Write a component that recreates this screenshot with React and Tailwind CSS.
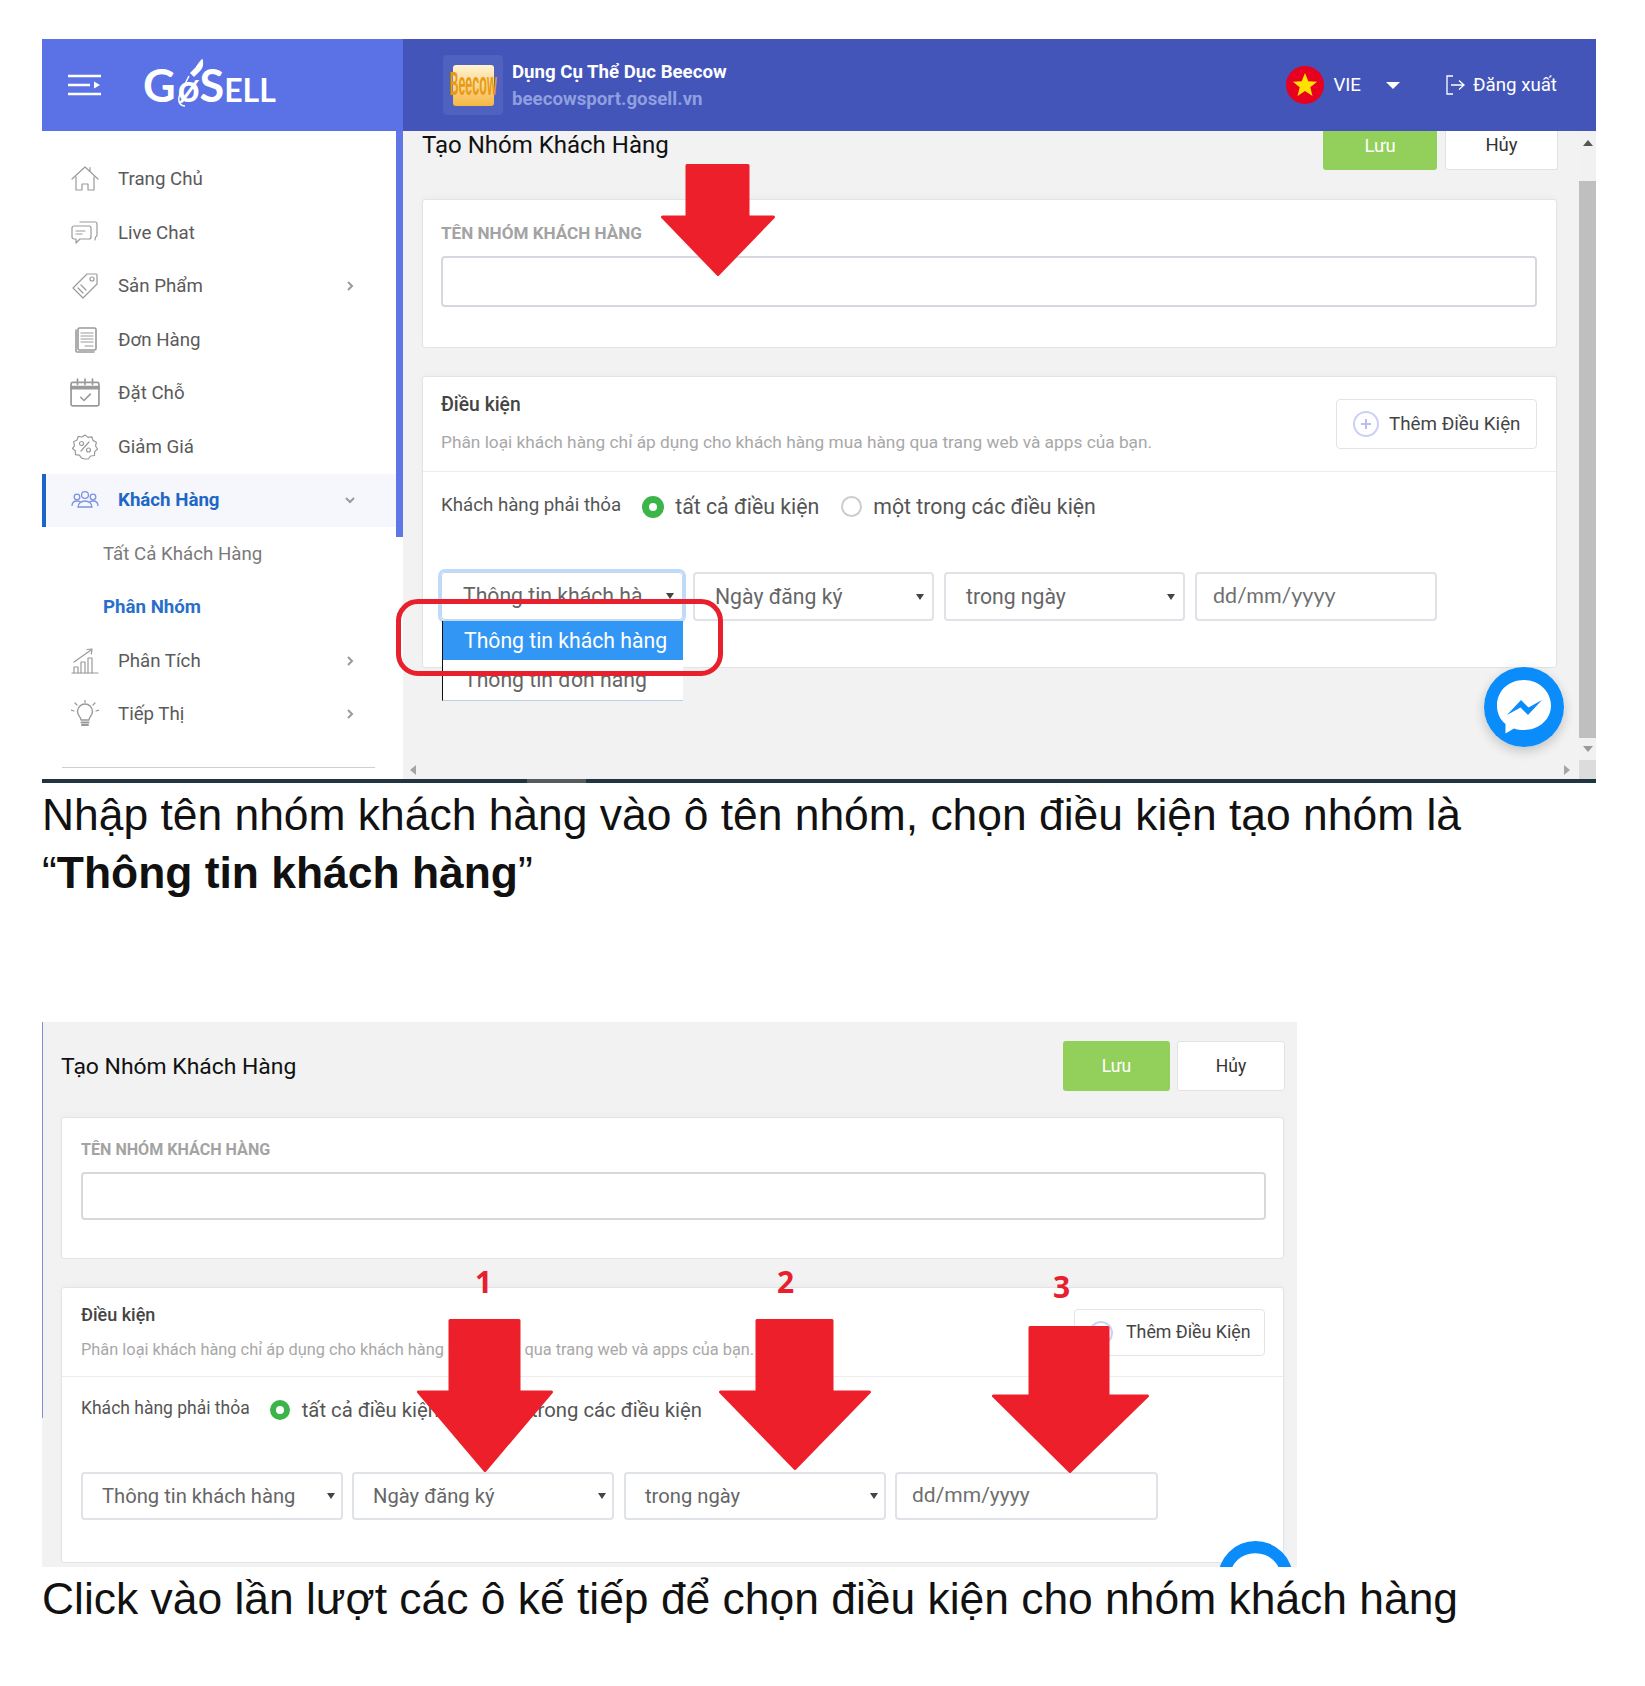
import React from "react";

const I = ({ children, size = 28 }) => (
  <svg width={size} height={size} viewBox="0 0 28 28" fill="none" stroke="#9a9a9a" strokeWidth="1.2" strokeLinecap="round" strokeLinejoin="round" className="shrink-0">
    {children}
  </svg>
);

const icons = {
  home: (
    <I>
      <path d="M1 14 14 2l13 12M19 6V2.5M5 12v13h6v-6h6v6h6V12" />
    </I>
  ),
  chat: (
    <I>
      <path d="M9 3h15a2 2 0 0 1 2 2v11a2 2 0 0 1-1.5 2l-.5 3" />
      <path d="M3 7h15a2 2 0 0 1 2 2v9a2 2 0 0 1-2 2H9l-4 4v-4H3a2 2 0 0 1-2-2V9a2 2 0 0 1 2-2Z" />
      <path d="M5 12h9M5 15h6" />
    </I>
  ),
  tag: (
    <I>
      <path d="M16 2h9a1 1 0 0 1 1 1v9L12 26 2 16 16 2Z" />
      <circle cx="21" cy="7" r="2" />
      <path d="m7 16 5 5M10 13l5 5" />
    </I>
  ),
  order: (
    <I>
      <path d="M5 4v21a1 1 0 0 0 1 1h17" strokeWidth="1.6" />
      <rect x="7" y="2" width="18" height="22" rx="1.5" strokeWidth="1.6" />
      <path d="M10 7h12M10 10h12M10 13h12M10 16h12M14 20h8" />
    </I>
  ),
  cal: (
    <I size={30}>
      <rect x="1" y="4" width="26" height="22" rx="1.5" strokeWidth="1.6" />
      <path d="M1 9h26" strokeWidth="3.400" />
      <path d="M7 1v5M14 1v5M21 1v5" strokeWidth="1.6" />
      <path d="m10 18 3 3 6-6" strokeWidth="1.5" />
    </I>
  ),
  sale: (
    <I>
      <path d="M14 2l3 2.4 3.8-.6 1.2 3.6 3.4 1.8-.9 3.8 2 3-2.8 2.6-.2 3.9-3.8.5-2.4 3L14 26l-3.3-.9-2.4-3-3.8-.5-.2-3.9L1.5 15.6l2-3-.9-3.8L6 7l1.2-3.6 3.8.6L14 2Z" />
      <path d="m10 18 8-9" />
      <circle cx="10.5" cy="10.5" r="2" />
      <circle cx="17.5" cy="17" r="2" />
    </I>
  ),
  users: (
    <svg width="28" height="28" viewBox="0 0 28 28" fill="none" stroke="#7d92e2" strokeWidth="1.3" className="shrink-0">
      <circle cx="14" cy="9" r="3.4" />
      <circle cx="6" cy="11" r="2.8" />
      <circle cx="22" cy="11" r="2.8" />
      <path d="M1 20c0-3 2-5 5-5 2 0 3 .5 4 1.5M27 20c0-3-2-5-5-5-2 0-3 .5-4 1.5M7 21c0-3.500 3-6 7-6s7 2.500 7 6H7Z" />
    </svg>
  ),
  chart: (
    <I>
      <path d="M1 26h26" />
      <path d="M3 26v-6h4v6M10 26V15h4v11M17 26V11h4v15" />
      <path d="M3 15 20 3" />
      <path d="M16 2.500 21 2l-.6 5" />
    </I>
  ),
  bulb: (
    <I>
      <path d="M10 20c0-3-3.500-4.500-3.500-8.500a7.500 7.500 0 0 1 15 0C21.500 15.500 18 17 18 20h-8Z" strokeWidth="1.4" />
      <path d="M10.500 22.500h7M11 25h6" strokeWidth="2" />
      <path d="M14 0v2.500M4 3l2 2M24 3l-2 2M0 10l3 1M28 10l-3 1" />
    </I>
  ),
};

const Chevron = ({ down }) => (
  <svg width="12" height="12" viewBox="0 0 12 12" fill="none" stroke="#9a9a9a" strokeWidth="2" className="ml-auto mr-[40px]">
    <path d={down ? "M2 4l4 4 4-4" : "M4 2l4 4-4 4"} />
  </svg>
);

const Row = ({ icon, label, arrow }) => (
  <div className="flex h-[53.5px] items-center pl-[29px] text-[18.700px] text-[#5a5a5a]">
    <span className="flex w-[28px] justify-center">{icons[icon]}</span>
    <span className="ml-[19px]">{label}</span>
    {arrow && <Chevron />}
  </div>
);

const Caret = ({ near }) => (
  <svg width="8" height="6" viewBox="0 0 8 6" className={near ? "absolute right-[6px] top-1/2 -translate-y-1/2" : "absolute right-[8px] top-1/2 -translate-y-1/2"} fill="#444">
    <path d="M0 0h8L4 6z" />
  </svg>
);

const Arrow = ({ className, w, h, s1, s2, hy, tip }) => (
  <svg width={w} height={h} viewBox={`0 0 ${w} ${h}`} className={className} fill="#ed1f2b" stroke="#ed1f2b" strokeWidth="3" strokeLinejoin="round">
    <polygon points={`${s1},1.500 ${s2},1.500 ${s2},${hy} ${w - 1.5},${hy} ${tip},${h - 1.5} 1.500,${hy} ${s1},${hy}`} />
  </svg>
);

const Bubble = ({ size }) => (
  <svg width={size} height={size} viewBox="0 0 80 80" className="block">
    <circle cx="40" cy="40" r="40" fill="#0a8dfb" />
    <path d="M40 13c-15.500 0-27 11-27 25.500 0 7.500 3 14 8.500 18.500v9.500l8.500-5c3 1 6.500 1.500 10 1.500 15.500 0 27-11 27-24.500S55.500 13 40 13Z" fill="#fff" />
    <path d="m23 48 14-15 7.500 7.500L58 33 44 48l-7.500-7.500L23 48Z" fill="#0a8dfb" />
  </svg>
);

export default function App() {
  return (
    <div className="min-h-[1686px] w-[1645px] bg-white pl-[42px] pt-[39px] font-['Roboto',sans-serif]">
      {/* first screenshot */}
      <section className="relative flex h-[744px] w-[1554px] flex-col overflow-hidden border-b-4 border-[#1f3540]">
        <header className="flex h-[92px] shrink-0">
          <div className="relative flex w-[361px] items-center bg-[#5a72e6] pl-[26px]">
            <svg width="33" height="22" viewBox="0 0 33 22" stroke="#fff" strokeWidth="2.400" fill="#fff">
              <path d="M0 2h33M0 11h22M0 20h33" />
              <path d="M26 7.500 32 11l-6 3.500z" stroke="none" />
            </svg>
            <div className="relative ml-[42px] flex h-[52px] w-[136px] items-baseline pt-[6px] font-['Lato',sans-serif] font-bold leading-none text-white">
              <span className="text-[45px] leading-[40px]">G</span>
              <span className="ml-[2px] text-[38px] leading-[40px]">ø</span>
              <span className="text-[45px] leading-[40px]">S</span>
              <span className="text-[32px] leading-[34px]">ELL</span>
              <svg width="30" height="50" viewBox="0 0 30 50" className="absolute left-[32px] top-0" fill="none" stroke="#fff" strokeWidth="1.500">
                <path d="M27 1c1 4 0 8-3 11l-5 5-3-3 5-5c2-3 4-6 6-8Z" fill="#fff" />
                <path d="M14 17 5 35c-3 7 0 12 5 12" />
              </svg>
            </div>
          </div>
          <div className="flex flex-1 items-center bg-[#4355b8] pl-[40px] pr-[39px]">
            <div className="flex h-[60px] w-[60px] items-center justify-center rounded-[4px] bg-[#5061c0]">
              <div className="flex h-[41px] w-[41px] items-center justify-center rounded-[3px] bg-gradient-to-b from-[#fff3d0] to-[#f6b73c] font-['Liberation_Sans',sans-serif] text-[12.500px] font-bold text-[#e89b12]">
                <span className="scale-y-[2.600]">Beecow</span>
              </div>
            </div>
            <div className="ml-[9px] flex flex-col pt-[2px] font-bold">
              <span className="text-[18.650px] leading-[27px] text-white">Dụng Cụ Thể Dục Beecow</span>
              <span className="text-[18.700px] leading-[27px] text-[#8f9fe0]">beecowsport.gosell.vn</span>
            </div>
            <svg width="38" height="38" viewBox="0 0 38 38" className="ml-auto">
              <circle cx="19" cy="19" r="19" fill="#e8001f" />
              <path d="m19 7 3.300 8.200 8.800.500-6.800 5.600 2.200 8.600L19 25.100l-7.500 4.800 2.200-8.600-6.800-5.600 8.800-.500z" fill="#ffe000" />
            </svg>
            <span className="ml-[9px] text-[18.700px] text-white">VIE</span>
            <svg width="14" height="7" viewBox="0 0 14 7" fill="#fff" className="ml-[25px]">
              <path d="M0 0h14L7 7z" />
            </svg>
            <svg width="20" height="20" viewBox="0 0 20 20" fill="none" stroke="#fff" strokeWidth="1.300" className="ml-[45px]">
              <path d="M8 1H2v18h6M6 10h13M14 5.500l5 4.500-5 4.500" />
            </svg>
            <span className="ml-[8px] text-[18.700px] text-white">Đăng xuất</span>
          </div>
        </header>

        <div className="flex min-h-0 flex-1">
          <aside className="flex w-[361px] shrink-0 bg-white">
            <div className="w-[354px] pt-[21.500px]">
              <Row icon="home" label="Trang Chủ" />
              <Row icon="chat" label="Live Chat" />
              <Row icon="tag" label="Sản Phẩm" arrow />
              <Row icon="order" label="Đơn Hàng" />
              <Row icon="cal" label="Đặt Chỗ" />
              <Row icon="sale" label="Giảm Giá" />
              <div className="flex h-[53.500px] items-center border-l-4 border-[#1a66c8] bg-[#f5f7fc] pl-[25px] text-[18.700px] font-bold text-[#1f67c4]">
                <span className="flex w-[28px] justify-center">{icons.users}</span>
                <span className="ml-[19px]">Khách Hàng</span>
                <Chevron down />
              </div>
              <div className="flex h-[53.500px] items-center pl-[61px] text-[18.700px] text-[#7a7a7a]">Tất Cả Khách Hàng</div>
              <div className="flex h-[53.500px] items-center pl-[61px] text-[18.700px] font-bold text-[#2a6fc9]">Phân Nhóm</div>
              <Row icon="chart" label="Phân Tích" arrow />
              <Row icon="bulb" label="Tiếp Thị" arrow />
              <div className="ml-[20px] mt-[26px] h-px w-[313px] bg-[#cfcfcf]" />
            </div>
            <div className="h-[406px] w-[7px] bg-[#5f77e6]" />
          </aside>

          <main className="relative flex min-w-0 flex-1 flex-col bg-[#f2f2f2]">
            <div className="flex min-h-0 flex-1">
              <div className="min-w-0 flex-1 pl-[19px] pr-[22px]">
                <div className="flex h-[39px] items-start justify-between">
                  <h1 className="text-[24px] font-normal leading-[28px] text-[#111]">Tạo Nhóm Khách Hàng</h1>
                  <div className="-mr-px flex gap-[8px]">
                    <div className="flex h-[39px] w-[114px] items-center justify-center rounded-b-[3px] bg-[#92d05b] pb-[8px] text-[18.500px] text-white">Lưu</div>
                    <div className="flex h-[39px] w-[113px] items-center justify-center rounded-b-[3px] border-x border-b border-[#e2e2e2] bg-white pb-[8px] text-[18.500px] text-[#333]">Hủy</div>
                  </div>
                </div>
                <div className="mt-[29px] h-[149px] rounded-[3px] border border-[#e3e3e3] bg-white pl-[18px] pr-[19px] pt-[23px] shadow-[0_-3px_6px_rgba(0,0,0,0.02)]">
                  <div className="text-[17.100px] font-bold leading-[20px] text-[#a3a3a3]">TÊN NHÓM KHÁCH HÀNG</div>
                  <div className="mt-[13px] h-[51px] rounded-[4px] border-2 border-[#d5d9df] bg-white" />
                </div>
                <div className="mt-[28px] h-[292px] rounded-[3px] border border-[#e3e3e3] bg-white shadow-[0_-3px_6px_rgba(0,0,0,0.02)]">
                  <div className="flex h-[95px] justify-between border-b border-[#ececec] pl-[18px] pr-[19px]">
                    <div>
                      <div className="mt-[16px] text-[19.300px] font-medium leading-[24px] text-[#444]">Điều kiện</div>
                      <div className="mt-[14px] text-[17.300px] leading-[22px] text-[#a8a8a8]">Phân loại khách hàng chỉ áp dụng cho khách hàng mua hàng qua trang web và apps của bạn.</div>
                    </div>
                    <div className="mt-[22px] flex h-[50px] w-[201px] items-center rounded-[4px] border border-[#e2e4ea] pl-[16px] text-[18.800px] text-[#444]">
                      <svg width="26" height="26" viewBox="0 0 26 26" fill="none" stroke="#ccd0f5" strokeWidth="2">
                        <circle cx="13" cy="13" r="12" />
                        <path d="M13 8v10M8 13h10" stroke="#b9bff0" />
                      </svg>
                      <span className="ml-[10px]">Thêm Điều Kiện</span>
                    </div>
                  </div>
                  <div className="flex h-[68px] items-center pl-[18px] pt-[1px] text-[#555]">
                    <span className="-mt-[2px] text-[18.700px]">Khách hàng phải thỏa</span>
                    <span className="ml-[21px] h-[22px] w-[22px] rounded-full border-[7px] border-[#3cb44a] bg-white" />
                    <span className="ml-[11px] text-[21.300px]">tất cả điều kiện</span>
                    <span className="ml-[22px] h-[21px] w-[21px] rounded-full border-2 border-[#cccccc] bg-white" />
                    <span className="ml-[11px] text-[21.300px]">một trong các điều kiện</span>
                  </div>
                  <div className="mt-[32px] flex items-start gap-[10px] pl-[18px] text-[21.200px] text-[#666]">
                    <div className="relative h-[48px] w-[242px] rounded-[4px] border border-[#cfd5de] shadow-[0_0_0_3px_#bcdcff]">
                      <div className="flex h-full items-center pl-[21px]">
                        <span className="w-[180px] overflow-hidden whitespace-nowrap">Thông tin khách hàng</span>
                      </div>
                      <Caret />
                      <div className="absolute left-0 top-[48px] z-10 h-[80px] w-[241px] border-b border-l border-b-[#bcd0ee] border-l-[#111] bg-white">
                        <div className="flex h-[39px] items-center bg-[#3296f5] pl-[21px] text-white">Thông tin khách hàng</div>
                        <div className="flex h-[40px] items-center pl-[21px]">Thông tin đơn hàng</div>
                      </div>
                    </div>
                    <div className="relative flex h-[49px] w-[241px] items-center rounded-[4px] border-2 border-[#dfe2e7] pl-[20px]">
                      Ngày đăng ký
                      <Caret />
                    </div>
                    <div className="relative flex h-[49px] w-[241px] items-center rounded-[4px] border-2 border-[#dfe2e7] pl-[20px]">
                      trong ngày
                      <Caret />
                    </div>
                    <div className="flex h-[49px] w-[242px] items-center rounded-[4px] border-2 border-[#dfe2e7] pb-[2px] pl-[16px] font-['Lato',sans-serif] text-[21.500px] text-[#6f6f6f]">dd/mm/yyyy</div>
                  </div>
                </div>
              </div>
              <div className="flex w-[17px] shrink-0 flex-col bg-[#f1f1f1]">
                <div className="flex h-[50px] justify-center pt-[9px]">
                  <svg width="10" height="6" viewBox="0 0 10 6" fill="#555">
                    <path d="M5 0l5 6H0z" />
                  </svg>
                </div>
                <div className="min-h-0 flex-1 bg-[#bfbfbf]" />
                <div className="flex h-[22px] items-center justify-center">
                  <svg width="10" height="6" viewBox="0 0 10 6" fill="#9a9a9a">
                    <path d="M0 0h10L5 6z" />
                  </svg>
                </div>
              </div>
            </div>
            <div className="flex h-[19px] shrink-0 items-center justify-between">
              <svg width="6" height="10" viewBox="0 0 6 10" fill="#a5a5a5" className="ml-[7px]">
                <path d="M6 0v10L0 5z" />
              </svg>
              <div className="flex items-center">
                <svg width="6" height="10" viewBox="0 0 6 10" fill="#a5a5a5" className="mr-[9px]">
                  <path d="M0 0v10l6-5z" />
                </svg>
                <div className="h-[19px] w-[17px] bg-[#dcdcdc]" />
              </div>
            </div>
          </main>
        </div>

        {/* overlays */}
        <Arrow className="absolute left-[619px] top-[125px] z-20" w={114} h={112} s1={26} s2={87} hy={53} tip={57} />
        <div className="absolute left-[354px] top-[560px] z-20 h-[77px] w-[327px] rounded-[22px] border-[5px] border-[#e8202e]" />
        <div className="absolute left-[1442px] top-[628px] z-20 rounded-full shadow-[0_4px_12px_rgba(0,0,0,0.2)]">
          <Bubble size={80} />
        </div>
      </section>
      <div className="relative -mt-[4px] ml-[485px] h-[4px] w-[59px] bg-[#555a5e]" />

      <div className="mt-[3px] w-[1554px] font-['Liberation_Sans',sans-serif] text-[44.400px] leading-[58px] text-[#111]">
        <p>Nhập tên nhóm khách hàng vào ô tên nhóm, chọn điều kiện tạo nhóm là</p>
        <p>“<b>Thông tin khách hàng</b>”</p>
      </div>

      {/* second screenshot */}
      <section className="relative mt-[120px] h-[545px] w-[1255px] overflow-hidden bg-[#f2f2f2] pl-[19px] pr-[12px] pt-[19px]">
        <div className="absolute left-0 top-0 h-[396px] w-px bg-[#7d8fd8]" />
        <div className="flex h-[50px] items-center justify-between">
          <h2 className="pt-[2px] text-[22.900px] font-normal text-[#111]">Tạo Nhóm Khách Hàng</h2>
          <div className="flex gap-[7px]">
            <div className="flex h-[50px] w-[107px] items-center justify-center rounded-[3px] bg-[#92d05b] text-[17.500px] text-white">Lưu</div>
            <div className="flex h-[50px] w-[108px] items-center justify-center rounded-[3px] border border-[#e2e2e2] bg-white text-[17.500px] text-[#333]">Hủy</div>
          </div>
        </div>
        <div className="mr-[1px] mt-[26px] h-[142px] rounded-[3px] border border-[#e3e3e3] bg-white pl-[19px] pr-[17px] pt-[22px] shadow-[0_-3px_6px_rgba(0,0,0,0.02)]">
          <div className="text-[16.100px] font-bold leading-[20px] text-[#a3a3a3]">TÊN NHÓM KHÁCH HÀNG</div>
          <div className="mt-[12px] h-[48px] rounded-[4px] border-2 border-[#d9d9d9] bg-white" />
        </div>
        <div className="mr-[1px] mt-[28px] h-[276px] rounded-[3px] border border-[#e3e3e3] bg-white shadow-[0_-3px_6px_rgba(0,0,0,0.02)]">
          <div className="flex h-[89px] justify-between border-b border-[#ececec] pl-[19px] pr-[18px]">
            <div>
              <div className="mt-[15px] text-[18px] font-medium leading-[24px] text-[#444]">Điều kiện</div>
              <div className="mt-[12px] text-[16.360px] leading-[22px] text-[#a8a8a8]">Phân loại khách hàng chỉ áp dụng cho khách hàng mua hàng qua trang web và apps của bạn.</div>
            </div>
            <div className="mt-[21px] flex h-[47px] w-[191px] items-center rounded-[4px] border border-[#e2e4ea] pl-[14px] text-[17.800px] text-[#444]">
              <svg width="24" height="24" viewBox="0 0 24 24" fill="none" stroke="#ccd0f5" strokeWidth="2">
                <circle cx="12" cy="12" r="11" />
              </svg>
              <span className="ml-[13px]">Thêm Điều Kiện</span>
            </div>
          </div>
          <div className="flex h-[62px] items-center pl-[19px] pt-[4px] text-[#555]">
            <span className="-mt-[3px] text-[17.500px]">Khách hàng phải thỏa</span>
            <span className="ml-[20px] h-[20px] w-[20px] rounded-full border-[6px] border-[#3cb44a] bg-white" />
            <span className="ml-[12px] text-[20.300px]">tất cả điều kiện</span>
            <span className="ml-[22px] h-[20px] w-[20px] rounded-full border-2 border-[#cccccc] bg-white" />
            <span className="ml-[9px] text-[20.300px]">một trong các điều kiện</span>
          </div>
          <div className="mt-[33px] flex gap-[9px] pl-[19px] text-[20.200px] text-[#666]">
            <div className="relative flex h-[48px] w-[262px] items-center rounded-[4px] border-2 border-[#dfe2e7] pl-[19px]">
              Thông tin khách hàng
              <Caret near />
            </div>
            <div className="relative flex h-[48px] w-[262px] items-center rounded-[4px] border-2 border-[#dfe2e7] pl-[19px]">
              Ngày đăng ký
              <Caret near />
            </div>
            <div className="relative ml-px flex h-[48px] w-[262px] items-center rounded-[4px] border-2 border-[#dfe2e7] pl-[19px]">
              trong ngày
              <Caret near />
            </div>
            <div className="flex h-[48px] w-[263px] items-center rounded-[4px] border-2 border-[#dfe2e7] pl-[15px] text-[21px] text-[#6f6f6f]">dd/mm/yyyy</div>
          </div>
        </div>

        <span className="absolute left-[433px] top-[240px] font-['Open_Sans',sans-serif] text-[30px] font-bold leading-[40px] text-[#e8202e]">1</span>
        <span className="absolute left-[735px] top-[240px] font-['Open_Sans',sans-serif] text-[30px] font-bold leading-[40px] text-[#e8202e]">2</span>
        <span className="absolute left-[1011px] top-[245px] font-['Open_Sans',sans-serif] text-[30px] font-bold leading-[40px] text-[#e8202e]">3</span>
        <Arrow className="absolute left-[375px] top-[297px]" w={136} h={153} s1={33} s2={102} hy={73} tip={68} />
        <Arrow className="absolute left-[677px] top-[297px]" w={152} h={151} s1={38} s2={113} hy={73} tip={76} />
        <Arrow className="absolute left-[950px] top-[304px]" w={157} h={147} s1={38} s2={116} hy={70} tip={78} />
        <div className="absolute left-[1176px] top-[519px]">
          <Bubble size={75} />
        </div>
      </section>

      <p className="mt-[3px] w-[1554px] font-['Liberation_Sans',sans-serif] text-[44.400px] leading-[58px] text-[#111]">Click vào lần lượt các ô kế tiếp để chọn điều kiện cho nhóm khách hàng</p>
    </div>
  );
}
